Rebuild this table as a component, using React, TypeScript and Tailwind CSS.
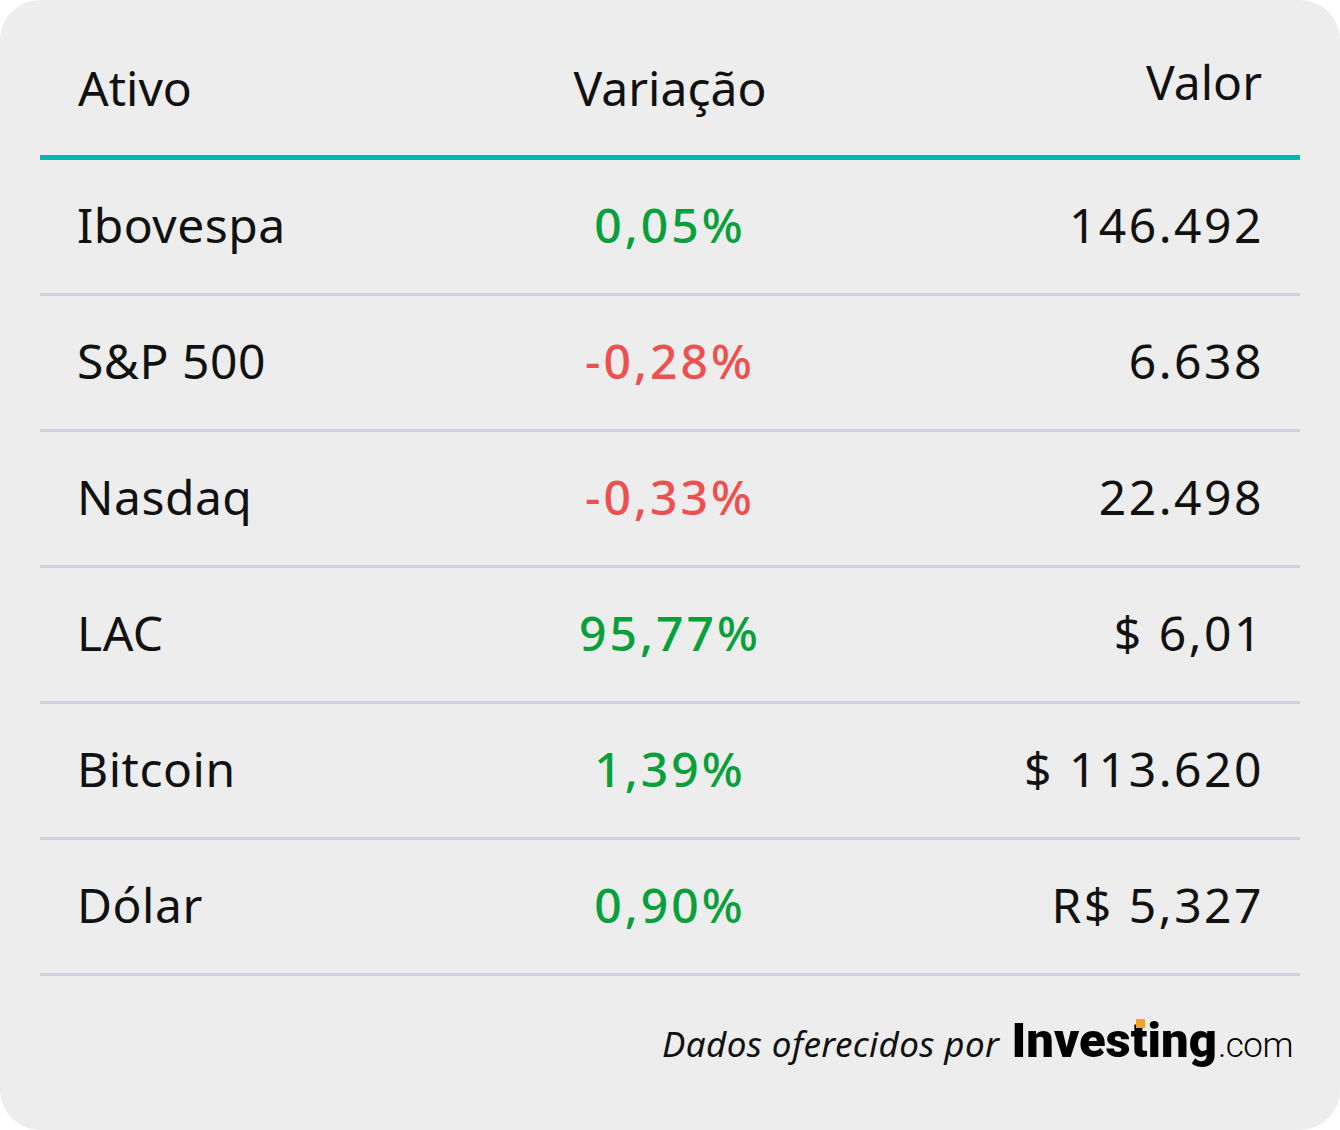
const rows = [
  { name: "Ibovespa", change: "0,05%", up: true, value: "146.492" },
  { name: "S&P 500", change: "-0,28%", up: false, value: "6.638" },
  { name: "Nasdaq", change: "-0,33%", up: false, value: "22.498" },
  { name: "LAC", change: "95,77%", up: true, value: "$ 6,01" },
  { name: "Bitcoin", change: "1,39%", up: true, value: "$ 113.620" },
  { name: "Dólar", change: "0,90%", up: true, value: "R$ 5,327" },
]

const InvestingLogo = () => (
  <div className="flex items-baseline">
    <span className="font-['Roboto',sans-serif] font-black text-[49px] leading-none tracking-[0px] text-black">
      Inves
      <span className="relative">
        t
        <span className="absolute left-[5px] top-[7px] w-[9px] h-[9px] bg-[#f7a21b]" />
      </span>
      ing
    </span>
    <span className="font-['Roboto',sans-serif] font-light text-[35px] leading-none tracking-[-0.5px] text-black ml-[1px]">
      .com
    </span>
  </div>
)

export default function App() {
  return (
    <div className="w-[1340px] h-[1130px] bg-white font-['Noto_Sans',sans-serif] text-[#111]">
      <div className="h-full bg-[#ededed] rounded-[40px] px-10">
        <div className="h-[155px] grid grid-cols-3 items-center pt-5 text-[48px] leading-none">
          <div className="pl-[38px]">Ativo</div>
          <div className="text-center">Variação</div>
          <div className="text-right pr-[38px] pb-3">Valor</div>
        </div>
        <div className="h-[5px] bg-[#02b8ad]" />
        {rows.map((r) => (
          <div
            key={r.name}
            className="h-[136px] grid grid-cols-3 items-center pb-[4px] border-b-[3px] border-[#cbd2e1] text-[48px] leading-none"
          >
            <div className="pl-[37px] tracking-[0.5px]">{r.name}</div>
            <div
              className={`text-center font-medium tracking-[3px] ${r.up ? "text-[#07a03a]" : "text-[#ee4f4f]"}`}
            >
              {r.change}
            </div>
            <div className="text-right pr-[36px] tracking-[2.5px]">{r.value}</div>
          </div>
        ))}
        <div className="flex justify-end items-baseline gap-[12px] pt-[40px] pr-[7px]">
          <span className="italic text-[35px] leading-none tracking-[0.4px]">Dados oferecidos por</span>
          <InvestingLogo />
        </div>
      </div>
    </div>
  )
}
